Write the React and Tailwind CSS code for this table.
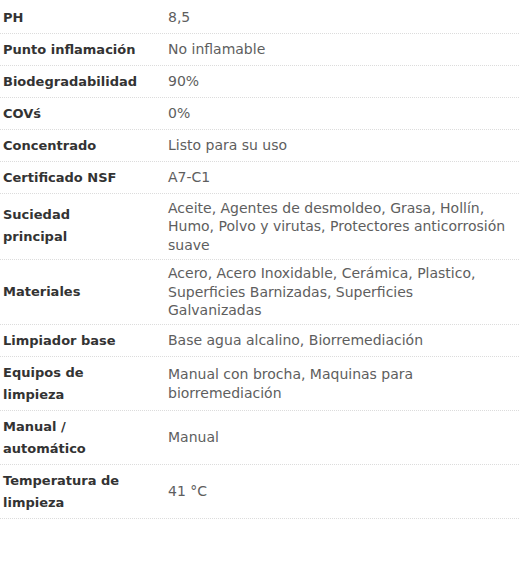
const SPECS = [
  ["PH", "8,5"],
  ["Punto inflamación", "No inflamable"],
  ["Biodegradabilidad", "90%"],
  ["COVś", "0%"],
  ["Concentrado", "Listo para su uso"],
  ["Certificado NSF", "A7-C1"],
  ["Suciedad\nprincipal", "Aceite, Agentes de desmoldeo, Grasa, Hollín, Humo, Polvo y virutas, Protectores anticorrosión suave"],
  ["Materiales", "Acero, Acero Inoxidable, Cerámica, Plastico, Superficies Barnizadas, Superficies Galvanizadas"],
  ["Limpiador base", "Base agua alcalino, Biorremediación"],
  ["Equipos de\nlimpieza", "Manual con brocha, Maquinas para biorremediación"],
  ["Manual /\nautomático", "Manual"],
  ["Temperatura de\nlimpieza", "41 °C"],
];

export default function App() {
  return (
    <div className="min-h-[576px] bg-white font-['DejaVu_Sans',sans-serif]">
      <div className="w-[519px] pt-[2px]">
        {SPECS.map(([label, value]) => (
          <div key={label} className="flex items-center py-[4.5px] border-b border-dotted border-[#dcdcdc]">
            <div className="w-[168px] shrink-0 pl-[3px] pr-4 text-[13px] leading-[22px] font-bold text-[#333] whitespace-pre-line">
              {label}
            </div>
            <div className="w-[340px] text-[14px] leading-[18.5px] text-[#5e5e5e]">
              {value}
            </div>
          </div>
        ))}
      </div>
    </div>
  );
}
